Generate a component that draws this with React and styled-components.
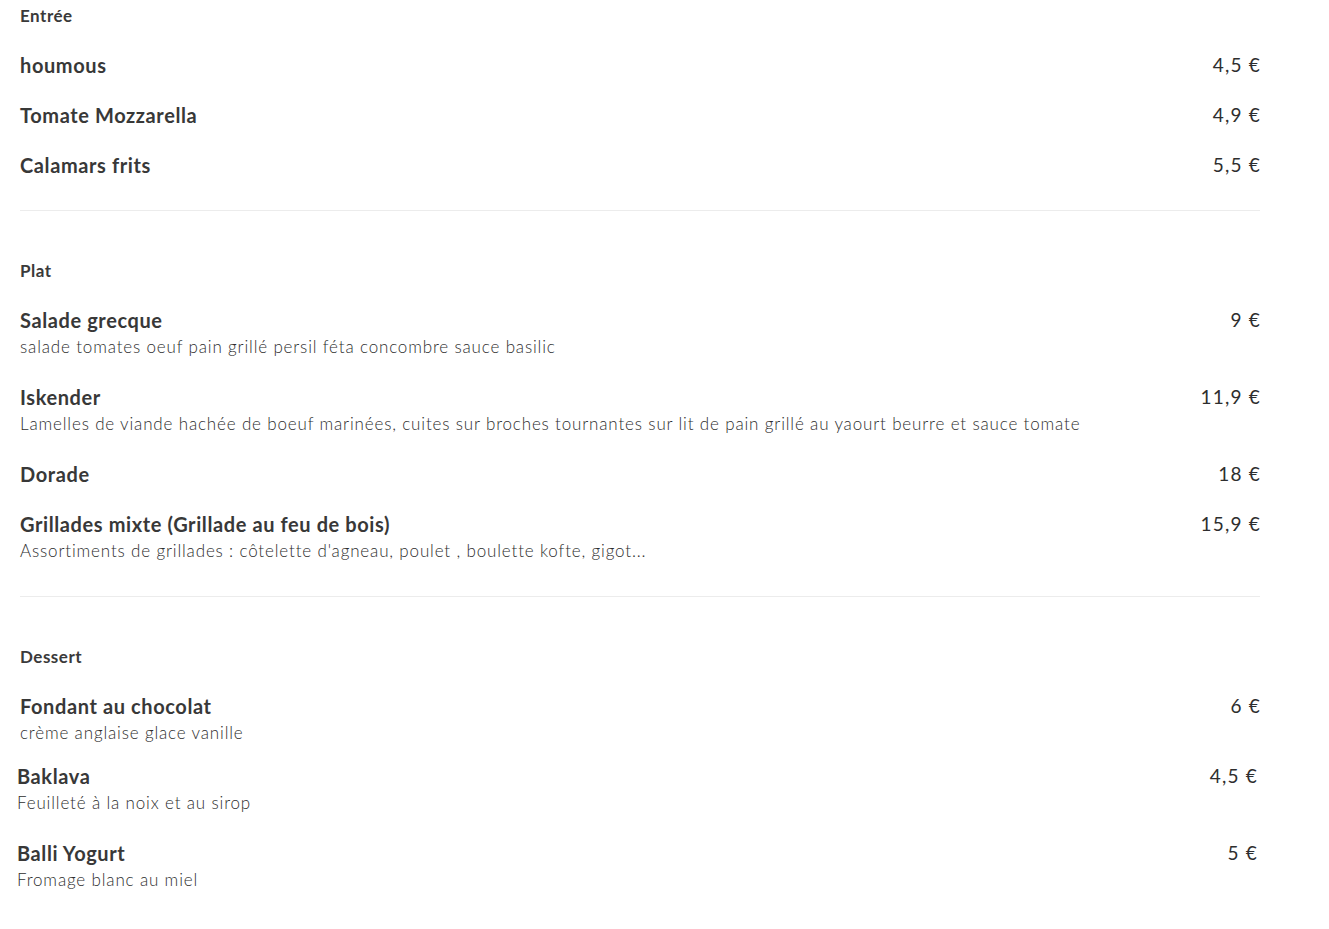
import React from "react";
import styled, { createGlobalStyle } from "styled-components";

const GlobalStyle = createGlobalStyle`
  html, body { margin: 0; padding: 0; background: #fff; }
  body { font-family: "Lato", "Open Sans", sans-serif; color: #333; }
`;

const Page = styled.main`
  padding: 4px 20px 0 20px;
  max-width: 1240px;
`;

const Section = styled.section`
  padding-bottom: ${(p) => (p.$last ? 0 : 20)}px;
  margin-bottom: ${(p) => (p.$last ? 0 : 48)}px;
  border-bottom: ${(p) => (p.$last ? "none" : "1px solid #ececec")};
`;

const SectionTitle = styled.h2`
  margin: ${(p) => p.$top || 0}px 0 ${(p) => p.$gap}px 0;
  font-size: 17px;
  line-height: 24px;
  font-weight: 700;
  letter-spacing: 0.5px;
  color: #3a3a3a;
`;

const Item = styled.div`
  display: flex;
  justify-content: space-between;
  align-items: flex-start;
  padding: 12px 0;
  margin-top: ${(p) => p.$shiftY || 0}px;
  margin-left: ${(p) => p.$shiftX || 0}px;
  margin-right: ${(p) => -(p.$shiftX || 0)}px;
`;

const Info = styled.div`
  display: flex;
  flex-direction: column;
`;

const Name = styled.div`
  font-size: 20px;
  line-height: 26px;
  font-weight: 700;
  letter-spacing: 0.6px;
  color: #383838;
`;

const Desc = styled.div`
  font-size: 17px;
  line-height: 27px;
  font-weight: 300;
  letter-spacing: 0.84px;
  color: #2e2e2e;
`;

const Price = styled.div`
  font-size: 19px;
  line-height: 26px;
  font-weight: 400;
  letter-spacing: 1.2px;
  margin-right: -1px;
  color: #2e2e2e;
  white-space: nowrap;
`;

const menu = [
  {
    title: "Entrée",
    gap: 12,
    items: [
      { name: "houmous", price: "4,5 €" },
      { name: "Tomate Mozzarella", price: "4,9 €" },
      { name: "Calamars frits", price: "5,5 €" },
    ],
  },
  {
    title: "Plat",
    gap: 12,
    items: [
      {
        name: "Salade grecque",
        desc: "salade tomates oeuf pain grillé persil féta concombre sauce basilic",
        price: "9 €",
      },
      {
        name: "Iskender",
        desc: "Lamelles de viande hachée de boeuf marinées, cuites sur broches tournantes sur lit de pain grillé au yaourt beurre et sauce tomate",
        price: "11,9 €",
      },
      { name: "Dorade", price: "18 €" },
      {
        name: "Grillades mixte (Grillade au feu de bois)",
        desc: "Assortiments de grillades : côtelette d'agneau, poulet , boulette kofte, gigot...",
        price: "15,9 €",
      },
    ],
  },
  {
    title: "Dessert",
    gap: 12,
    top: 1,
    last: true,
    items: [
      { name: "Fondant au chocolat", desc: "crème anglaise glace vanille", price: "6 €" },
      {
        name: "Baklava",
        desc: "Feuilleté à la noix et au sirop",
        price: "4,5 €",
        shiftX: -3,
        shiftY: -7,
      },
      { name: "Balli Yogurt", desc: "Fromage blanc au miel", price: "5 €", shiftX: -3 },
    ],
  },
];

export default function App() {
  return (
    <>
      <GlobalStyle />
      <Page>
        {menu.map((section) => (
          <Section key={section.title} $last={section.last}>
            <SectionTitle $gap={section.gap} $top={section.top}>
              {section.title}
            </SectionTitle>
            {section.items.map((item) => (
              <Item key={item.name} $shiftX={item.shiftX} $shiftY={item.shiftY}>
                <Info>
                  <Name>{item.name}</Name>
                  {item.desc && <Desc>{item.desc}</Desc>}
                </Info>
                <Price>{item.price}</Price>
              </Item>
            ))}
          </Section>
        ))}
      </Page>
    </>
  );
}
